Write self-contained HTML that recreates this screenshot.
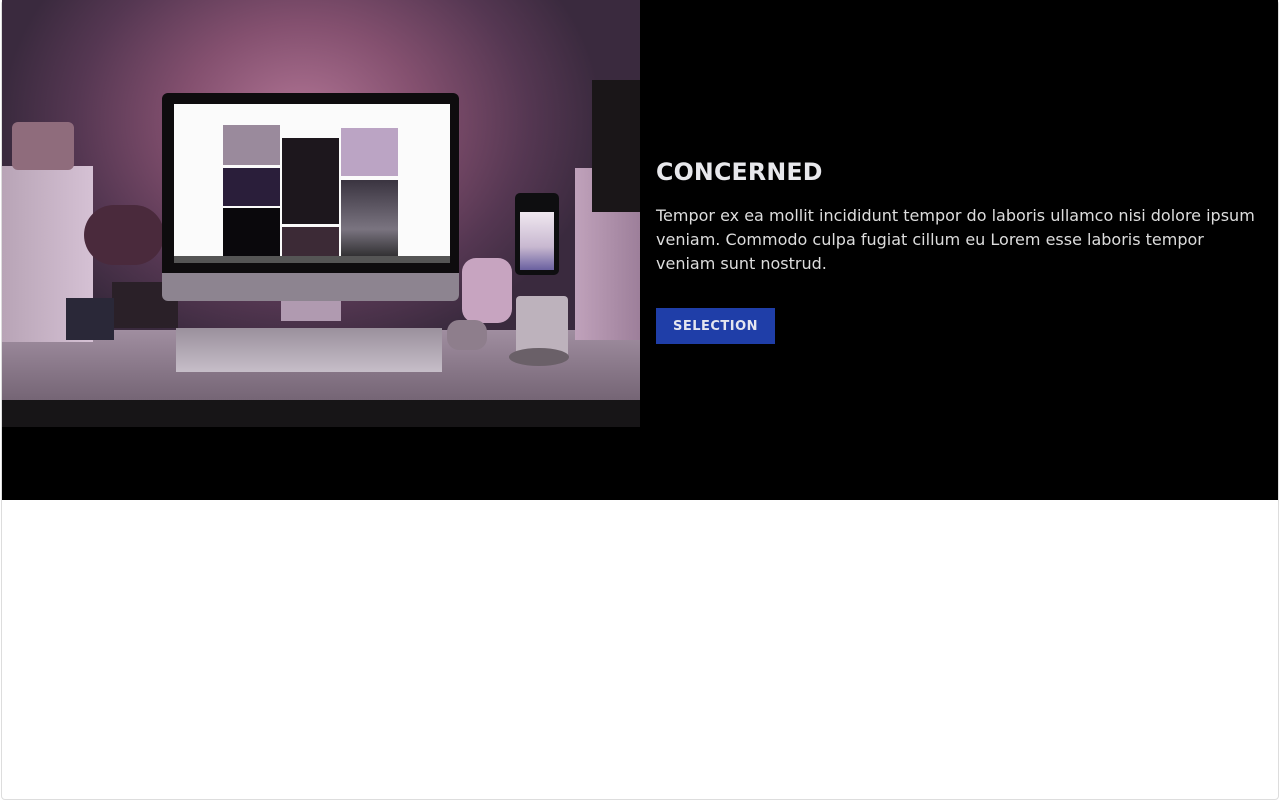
<!DOCTYPE html>
<html><head><meta charset="utf-8"><style>
*{margin:0;padding:0;box-sizing:border-box}
body{width:1280px;height:800px;background:#fff;font-family:"DejaVu Sans","Liberation Sans",sans-serif;overflow:hidden;position:relative}
.frame{position:absolute;left:1px;top:0;width:1278px;height:800px;border:1px solid #ddd;border-radius:4px;overflow:hidden}
.hero{position:absolute;left:2px;top:0;width:1276px;height:500px;background:#000}
.img{position:absolute;left:0;top:0;width:638px;height:427px;overflow:hidden;
background:radial-gradient(ellipse 300px 240px at 300px 120px,#b07494 0%,#84506f 40%,#553752 75%,#3a2a3e 100%)}
.a{position:absolute}
h2{position:absolute;left:654px;top:158px;color:#e8e8ec;font-size:23.7px;font-weight:bold;letter-spacing:.2px}
p{position:absolute;left:654px;top:204px;width:610px;color:#ddd;font-size:16px;line-height:24px}
.btn{position:absolute;left:654px;top:308px;width:119px;height:36px;background:#1f3ea8;color:#e4e6f0;font-size:13px;font-weight:bold;text-align:center;line-height:38px;letter-spacing:.5px}
</style></head><body>
<div class="frame"></div>
<div class="hero">
<div class="img">
 <div class="a" style="left:0;top:330px;width:638px;height:72px;background:linear-gradient(#a08ea0,#746474)"></div>
 <div class="a" style="left:0;top:400px;width:638px;height:27px;background:#171517"></div>
 <div class="a" style="left:0;top:166px;width:91px;height:176px;background:linear-gradient(90deg,#b8a4b6,#d5c1d4)"></div>
 <div class="a" style="left:10px;top:122px;width:62px;height:48px;background:#8f6c7c;border-radius:6px"></div>
 <div class="a" style="left:573px;top:168px;width:67px;height:172px;background:linear-gradient(90deg,#c0a2bb,#9c7e99)"></div>
 <div class="a" style="left:590px;top:80px;width:48px;height:132px;background:#1a1618"></div>
 <div class="a" style="left:82px;top:205px;width:80px;height:60px;background:#4a2a3c;border-radius:40px"></div>
 <div class="a" style="left:110px;top:282px;width:66px;height:46px;background:#2a2028"></div>
 <div class="a" style="left:64px;top:298px;width:48px;height:42px;background:#2a2838"></div>
 <div class="a" style="left:460px;top:258px;width:50px;height:65px;background:#c7a4c0;border-radius:14px"></div>
 <div class="a" style="left:160px;top:93px;width:297px;height:208px;background:#0e0c0e;border-radius:6px"></div>
 <div class="a" style="left:160px;top:273px;width:297px;height:28px;background:#8d8490;border-radius:0 0 6px 6px"></div>
 <div class="a" style="left:172px;top:104px;width:276px;height:158px;background:#fbfbfb"></div>
 <div class="a" style="left:221px;top:125px;width:57px;height:40px;background:#9a8a9c"></div>
 <div class="a" style="left:221px;top:168px;width:57px;height:38px;background:#2a1e3a"></div>
 <div class="a" style="left:221px;top:208px;width:57px;height:54px;background:#0a080c"></div>
 <div class="a" style="left:280px;top:138px;width:57px;height:86px;background:#1d171d"></div>
 <div class="a" style="left:280px;top:227px;width:57px;height:35px;background:#3c2a36"></div>
 <div class="a" style="left:339px;top:128px;width:57px;height:48px;background:#bba4c4"></div>
 <div class="a" style="left:339px;top:180px;width:57px;height:82px;background:linear-gradient(#3a3440,#7a7480 60%,#222)"></div>
 <div class="a" style="left:172px;top:256px;width:276px;height:7px;background:#555"></div>
 <div class="a" style="left:279px;top:301px;width:60px;height:20px;background:#b09ab0"></div>
 <div class="a" style="left:174px;top:328px;width:266px;height:44px;background:linear-gradient(#9a909c,#c6bec8)"></div>
 <div class="a" style="left:445px;top:320px;width:40px;height:30px;background:#8e7e8c;border-radius:12px"></div>
 <div class="a" style="left:513px;top:193px;width:44px;height:82px;background:#0e0e10;border-radius:5px"></div>
 <div class="a" style="left:518px;top:212px;width:34px;height:58px;background:linear-gradient(#f0e8f0,#c8b8d0 60%,#6a60a0)"></div>
 <div class="a" style="left:514px;top:296px;width:52px;height:62px;background:#bdb2bc;border-radius:4px"></div>
 <div class="a" style="left:507px;top:348px;width:60px;height:18px;background:#6a6068;border-radius:50%"></div>
</div>
<h2>CONCERNED</h2>
<p>Tempor ex ea mollit incididunt tempor do laboris ullamco nisi dolore ipsum veniam. Commodo culpa fugiat cillum eu Lorem esse laboris tempor veniam sunt nostrud.</p>
<div class="btn">SELECTION</div>
</div>
</body></html>
